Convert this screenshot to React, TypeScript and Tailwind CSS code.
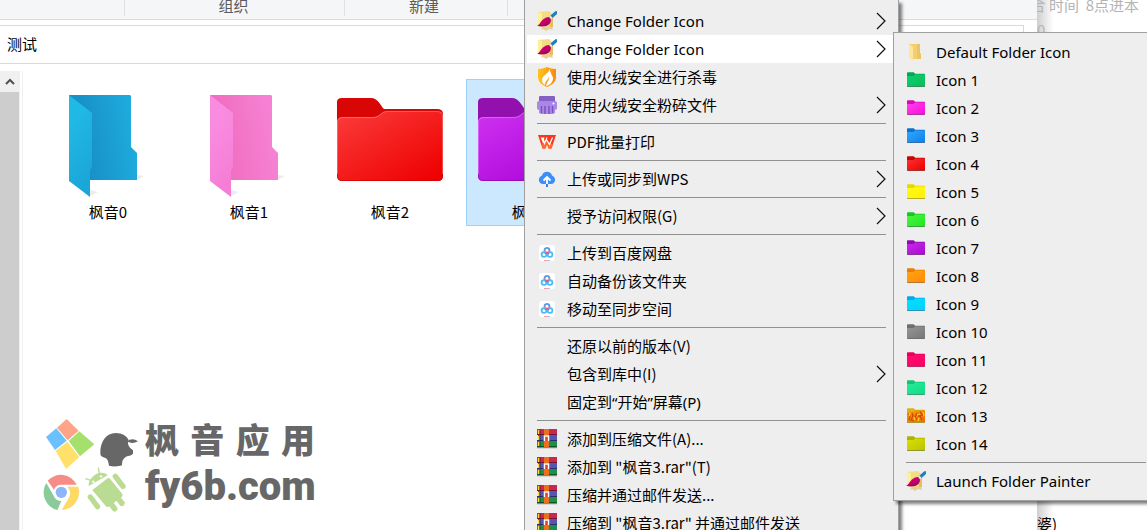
import React from "react";
import clsx from "clsx";

type IconProps = { id: string };

function BrushIcon() {
  return (
    <svg viewBox="0 0 20 20" className="size-5">
      <path d="M1 1l11-1 3 3 1 12-3 2-9-1-3-1z" fill="#f3dc83" />
      <path d="M1 1l4 1v12l-4 1z" fill="#fbf19b" />
      <path d="M12 5l4-1v12l-3 1z" fill="#e3be62" />
      <path d="M6 15l9 1 1 3-4-1-3 2-3-2-2 1z" fill="#e5cf98" />
      <path d="M13.500 4.500L18 .500q2-1 2 .500v2l-4.500 4z" fill="#1c7fc0" />
      <path d="M12 6l1.500-1.500 2 2.500-1.500 1.500z" fill="#dfe4e8" />
      <path d="M0 14.500c3-.500 3-3.500 6-6 2-1.700 4-2.500 6-2.500l2 2.500c0 3-1.500 5-4 6-3 1.300-7 1-10 0z" fill="#c4006c" />
      <path d="M0 14.500c5 0 8-2 13.500-4.500-1 2.500-2 3.800-4 4.600-3 1-7 .900-9.500-.100z" fill="#a4055c" />
    </svg>
  );
}

function ShieldIcon({ id }: IconProps) {
  return (
    <svg viewBox="0 0 20 20" className="size-5">
      <defs>
        <linearGradient id={id} x1="0" y1="0" x2="1" y2="0">
          <stop offset="0" stopColor="#ffc51e" />
          <stop offset="1" stopColor="#f98a0b" />
        </linearGradient>
      </defs>
      <path d="M1 2c4 0 6-1 9-2 3 1 5 2 9 2v8c0 5-4 8-9 10-5-2-9-5-9-10z" fill={`url(#${id})`} />
      <path d="M12 2c1 4-7 6-7 11 0 2 1 4 3 5-1-4 4-5 4-9 1 3-2 6-3 10 4-1 7-4 7-8 0-2-2-3-2-5-1-1-1-3-2-4z" fill="#fff" />
    </svg>
  );
}

function ShredderIcon() {
  return (
    <svg viewBox="0 0 20 20" className="size-5">
      <path d="M3 1h14a1 1 0 011 1v5H2V2a1 1 0 011-1z" fill="#8460c4" />
      <path d="M2 6h16a2 2 0 012 2v5a2 2 0 01-2 2H2a2 2 0 01-2-2V8a2 2 0 012-2z" fill="#aa86e6" />
      <path d="M2 11h16v7l-2 1H4l-2-1z" fill="#ad8ae8" />
      <path d="M4.500 11v7M8 11v8M12 11v8M15.500 11v7" stroke="#7953bd" strokeWidth="1.500" />
      <circle cx="16.500" cy="8.500" r="1" fill="#fff" />
    </svg>
  );
}

function WpsIcon() {
  return (
    <svg viewBox="0 0 20 20" className="size-5">
      <path d="M1 3h18l-4.500 13.500h-3L10 12l-1.500 4.500h-3z" fill="#f8371f" />
      <path d="M5.500 16.500h3L10 12l1.500 4.500h3l1.500-4-2.500-1-3.500-4-3.500 4-2-.500z" fill="#ff6a2c" />
      <path d="M4.500 6h2.200l-.700 3.500zM6 6l1.500 5.500L10 5.500M9 7l3.500 5.500L15.500 5.500" fill="none" stroke="#fff" strokeWidth="1.200" />
    </svg>
  );
}

function CloudIcon() {
  return (
    <svg viewBox="0 0 20 20" className="size-5">
      <path d="M5 6.500a5.200 5.200 0 0110 0c5 2 3.500 8.500-1 8.500H6C1.500 15 0 8.500 5 6.500z" fill="#3e8ef7" />
      <path d="M10 15V8M6.500 11.500L10 8l3.500 3.500" fill="none" stroke="#fff" strokeWidth="1.800" />
      <path d="M9 15h2v3H9z" fill="#2f80ee" />
    </svg>
  );
}

function NetdiskIcon() {
  return (
    <svg viewBox="0 0 20 20" className="size-5">
      <rect x="2" y="2" width="16" height="16" rx="3" fill="#fff" />
      <circle cx="10" cy="7.500" r="2.500" fill="none" stroke="#f0607f" strokeWidth="1.600" />
      <path d="M7.500 7.500a2.500 2.500 0 015 0" fill="none" stroke="#48a8f5" strokeWidth="1.600" />
      <circle cx="7" cy="11.500" r="2.400" fill="none" stroke="#45bdf6" strokeWidth="1.800" />
      <circle cx="13" cy="11.500" r="2.400" fill="none" stroke="#45bdf6" strokeWidth="1.800" />
      <path d="M10 9l-2 2M10 9l2 2" stroke="#ee5670" strokeWidth="1.500" />
      <path d="M7 17.500h3" stroke="#f59aa9" />
      <path d="M10 17.500h3" stroke="#9bc6f7" />
    </svg>
  );
}

function RarIcon() {
  return (
    <svg viewBox="0 0 20 20" className="size-5">
      <path d="M0 0h20v6H0z" fill="#c92750" />
      <path d="M0 5h20v1H0z" fill="#741532" />
      <path d="M1 6h19v6H1z" fill="#5456b4" />
      <path d="M0 11h20v1H0z" fill="#2c2c6c" />
      <path d="M0 12h20v6H0z" fill="#1d9044" />
      <path d="M0 17h20v1.500H0z" fill="#0d542a" />
      <path d="M1.500 1v4M1.500 7v4M1.500 13v4" stroke="#ffd83a" strokeWidth="1.200" />
      <path d="M3.500 0v18" stroke="#00000030" />
      <path d="M7 0h5v18H7z" fill="#e8701f" />
      <path d="M6.500 6h6v6h-6z" fill="#a8481c" />
      <path d="M7.500 12V7h4v5" fill="none" stroke="#fff" strokeWidth="1.500" />
      <path d="M9.500 8v4" stroke="#e0452a" />
      <path d="M0 19h20" stroke="#00000030" />
    </svg>
  );
}

function DefaultFolderIcon() {
  return (
    <svg viewBox="0 0 20 20" className="size-5">
      <path d="M3 2h11v9l1 1v5H6z" fill="#f3cf72" />
      <path d="M11 2h3v9l1 1v5h-4z" fill="#edc363" />
      <path d="M3 2l4 3v14l-4-3z" fill="#fde6a0" />
    </svg>
  );
}

function SmallFolder({ id, from, to, tab, fire }: IconProps & { from: string; to: string; tab: string; fire?: boolean }) {
  return (
    <svg viewBox="0 0 20 20" className="size-5">
      <defs>
        <linearGradient id={id} x1="0" y1="0" x2="1" y2="1">
          <stop offset="0" stopColor={from} />
          <stop offset="1" stopColor={to} />
        </linearGradient>
      </defs>
      <path d="M1 3q0-.700.700-.700h6l1.500 1.500h9q.800 0 .800.800V16q0 .700-.700.700H1.700Q1 16.700 1 16z" fill={tab} />
      <path d="M1 6h6.500L9 4.500h10V16H1z" fill={`url(#${id})`} />
      <path d="M1 16.500h18" stroke="#00000038" />
      {fire && (
        <g fill="none" strokeWidth="1.300">
          <path d="M2 8l2 2-1 4M6 7l1 3-2 4 3 1M11 7l-2 4 2 3M14 6l3 3-3 1 2 4M12 10h2" stroke="#d04a00" />
          <path d="M4 7l-1 3M8 11l1 3M13 12l-1 3M17 6l1 4M11 9l3-1" stroke="#ffd02e" />
        </g>
      )}
    </svg>
  );
}

function OpenFolder({ id, back, backTo, front, frontTo }: IconProps & { back: string; backTo: string; front: string; frontTo: string }) {
  return (
    <svg viewBox="0 0 106 110" className="h-[110px] w-[106px]">
      <defs>
        <linearGradient id={`${id}-b`} x1="0" y1="1" x2="1" y2="0.800">
          <stop offset="0.300" stopColor={back} />
          <stop offset="1" stopColor={backTo} />
        </linearGradient>
        <linearGradient id={`${id}-f`} x1="0" y1="0" x2="0.300" y2="1">
          <stop offset="0.300" stopColor={front} />
          <stop offset="1" stopColor={frontTo} />
        </linearGradient>
      </defs>
      <path d="M82 85l7 1-7 4zM35 100l8 2-8 4z" fill="#ececec" />
      <path d="M14 5h61l1 1v51l6 6v27H35z" fill={`url(#${id}-b)`} />
      <path d="M14 5l23 18v54l-2 3v27L14 91z" fill={`url(#${id}-f)`} />
    </svg>
  );
}

function ClosedFolder({ id, tab, from, to, edge }: IconProps & { tab: string; from: string; to: string; edge: string }) {
  return (
    <svg viewBox="0 0 106 110" className="h-[110px] w-[106px] shrink-0">
      <defs>
        <linearGradient id={id} x1="0" y1="0" x2="0.900" y2="1">
          <stop offset="0" stopColor={from} />
          <stop offset="1" stopColor={to} />
        </linearGradient>
      </defs>
      <path d="M0 12q0-4 5-4h29c7 0 9 7 13 11h53q6 0 6 5v60H0z" fill={tab} />
      <path d="M0 31q1-4 5-4h31c7 0 8-6 14-6h50q6 0 6 5v60q0 5-5 5H5q-5 0-5-5z" fill={`url(#${id})`} />
      <path d="M.500 84v2q0 4.500 4.500 4.500h96q4.500 0 4.500-4.500v-2" fill="none" stroke={edge} strokeOpacity="0.600" />
      <path d="M.500 84V31q1-3.500 4.500-3.500h31c7 0 8-6 14-6h50q5.500 0 5.500 5V84" fill="none" stroke="#ffffff" strokeOpacity="0.250" />
    </svg>
  );
}

type MenuEntry = {
  label: string;
  icon?: React.ReactNode;
  more?: boolean;
  latin?: boolean;
  active?: boolean;
};

const menuItems: MenuEntry[][] = [
  [
    { label: "Change Folder Icon", icon: <BrushIcon />, more: true, latin: true },
    { label: "Change Folder Icon", icon: <BrushIcon />, more: true, latin: true, active: true },
    { label: "使用火绒安全进行杀毒", icon: <ShieldIcon id="shield" /> },
    { label: "使用火绒安全粉碎文件", icon: <ShredderIcon />, more: true },
  ],
  [{ label: "PDF批量打印", icon: <WpsIcon /> }],
  [{ label: "上传或同步到WPS", icon: <CloudIcon />, more: true }],
  [{ label: "授予访问权限(G)", more: true }],
  [
    { label: "上传到百度网盘", icon: <NetdiskIcon /> },
    { label: "自动备份该文件夹", icon: <NetdiskIcon /> },
    { label: "移动至同步空间", icon: <NetdiskIcon /> },
  ],
  [
    { label: "还原以前的版本(V)" },
    { label: "包含到库中(I)", more: true },
    { label: "固定到“开始”屏幕(P)", latin: true },
  ],
  [
    { label: "添加到压缩文件(A)...", icon: <RarIcon /> },
    { label: "添加到 \"枫音3.rar\"(T)", icon: <RarIcon /> },
    { label: "压缩并通过邮件发送...", icon: <RarIcon /> },
    { label: "压缩到 \"枫音3.rar\" 并通过邮件发送", icon: <RarIcon /> },
  ],
];

const folderColors = [
  { from: "#12cf70", to: "#08bd5c", tab: "#04a94f" },
  { from: "#ff45ea", to: "#fb0cdc", tab: "#d80abd" },
  { from: "#35a8fb", to: "#0c80ee", tab: "#0c70d4" },
  { from: "#fb3333", to: "#ee0000", tab: "#cc0404" },
  { from: "#fff91c", to: "#fff200", tab: "#e8d800" },
  { from: "#4df547", to: "#1ee81c", tab: "#14c918" },
  { from: "#cc28ee", to: "#a80bd0", tab: "#8d0cab" },
  { from: "#ffa41c", to: "#ff8c00", tab: "#eb7d00" },
  { from: "#08dcff", to: "#00d4ff", tab: "#00abe8" },
  { from: "#959595", to: "#777777", tab: "#6d6d6d" },
  { from: "#ff0d73", to: "#ff0061", tab: "#e60058" },
  { from: "#2aea9b", to: "#10dc83", tab: "#10c575" },
  { from: "#f79a0c", to: "#ee6b05", tab: "#ddb313", fire: true },
  { from: "#dbe004", to: "#b9c400", tab: "#aab300" },
];

function MenuRow({ label, icon, more, latin, active }: MenuEntry) {
  return (
    <button
      type="button"
      role="menuitem"
      aria-haspopup={more ? "menu" : undefined}
      className={clsx(
        "flex h-7 w-full items-center gap-2.5 px-2.5 text-left text-[15px] whitespace-nowrap text-black",
        latin && "font-['Noto_Sans','Noto_Sans_CJK_SC',sans-serif]",
        active ? "bg-white" : "hover:bg-white"
      )}
    >
      <span className="size-5 shrink-0">{icon}</span>
      <span className="flex-1">{label}</span>
      {more && (
        <svg viewBox="0 0 10 18" className="h-[18px] w-2.5">
          <path d="M1 1l8 8-8 8" fill="none" stroke="#111" strokeWidth="1.200" />
        </svg>
      )}
    </button>
  );
}

function Separator() {
  return <div role="separator" className="mx-2.5 my-1 h-px bg-[#919191]" />;
}

function FileItem({ name, selected, children }: { name: string; selected?: boolean; children: React.ReactNode }) {
  return (
    <button
      type="button"
      className={clsx(
        "flex w-[130px] shrink-0 flex-col items-center border pt-2.5 pb-px text-[15px] leading-6 text-black",
        selected ? "border-[#99d1ff] bg-[#cce8ff]" : "border-transparent"
      )}
    >
      {children}
      {name}
    </button>
  );
}

function Watermark() {
  return (
    <div className="flex items-center gap-1.5 text-[#676767]">
      <svg viewBox="39 51 288 288" className="size-24">
        <path d="M110 57l36 35-33 29-32-38z" fill="#ffa488" />
        <path d="M79 85l31 37-35 28-27-39z" fill="#6bc1ff" />
        <path d="M148 94l45 39-43 36-34-46z" fill="#a5e06c" />
        <path d="M112 125l36 46-40 36-31-55z" fill="#ffe06b" />
        <path d="M211 160c-1-35 18-61 46-61 20 0 34 10 39 21-5 13 0 21 13 31v10c-6 7-13 5-21 9-8 5-13 13-12 26-11 4-27 4-39 1-3-19-6-22-17-25-7-3-9-6-9-12z" fill="#676767" />
        <path d="M291 124q16-12 33 0-17 10-33 0z" fill="#676767" />
        <path d="M53 242a53 53 0 0187 12H94q-16 0-22 15z" fill="#f58d86" />
        <path d="M49 249l24 42q7 12 21 12l-12 27a54 54 0 01-33-81z" fill="#8acb99" />
        <path d="M112 260h33a54 54 0 01-50 70l23-40q7-15-6-30z" fill="#ffd966" />
        <circle cx="94" cy="277" r="17" fill="#8cb5fa" />
        <g fill="#badb92">
          <path d="M176 258c-2-26 34-53 57-32z" />
          <path d="M187 270l46-35q4-3 7 1l37 46q3 5-2 9l-39 29q-5 3-9-2l-40-48z" />
          <rect x="248" y="221" width="16" height="54" rx="8" transform="rotate(-37 256 229)" />
          <rect x="173" y="283" width="16" height="52" rx="8" transform="rotate(-37 181 291)" />
          <path d="M230 308l13-10 19 25q2 9-7 12-6 0-8-4zM252 292l13-10 19 25q2 9-7 12-6 0-8-4z" />
        </g>
        <path d="M205 203l3 17M166 236l17 5" stroke="#badb92" strokeWidth="4" />
        <circle cx="190" cy="245" r="3.500" fill="#fff" />
        <circle cx="213" cy="229" r="3.500" fill="#fff" />
      </svg>
      <div className="flex w-[170px] flex-col">
        <div className="flex justify-between text-[34px] leading-[44px] font-black">
          {["枫", "音", "应", "用"].map((char) => (
            <span key={char}>{char}</span>
          ))}
        </div>
        <div className="font-['Roboto',sans-serif] text-[40px] leading-[52px] font-black">fy6b.com</div>
      </div>
    </div>
  );
}

function ExplorerWindow() {
  return (
    <main className="relative z-10 flex min-w-0 flex-1 flex-col bg-white">
      <div className="flex h-5 shrink-0 items-start border-b border-[#d9dbdd] bg-[#f5f6f7] text-[15px] leading-3 text-[#5c5c5c]">
        <div className="h-4 w-[125px] border-r border-[#dfe1e3]" />
        <div className="h-4 w-[220px] border-r border-[#dfe1e3] pr-0.5 text-center">组织</div>
        <div className="h-4 w-[163px] border-r border-[#dfe1e3] pr-1 text-center">新建</div>
      </div>
      <div className="mt-[5px] mr-[13px] flex h-[39px] shrink-0 items-center border border-l-0 border-[#d9d9d9] px-[7px] text-[15px] text-black">
        测试
      </div>
      <div className="mt-[7px] flex min-h-0 flex-1">
        <div className="flex w-5 flex-col bg-[#f0f0f0]">
          <button type="button" aria-label="向上滚动" className="flex h-[21px] shrink-0 items-center justify-center">
            <svg viewBox="0 0 10 8" className="h-2 w-2.5">
              <path d="M1 6l4-4 4 4" fill="none" stroke="#505050" strokeWidth="2" />
            </svg>
          </button>
          <div className="mr-px flex-1 bg-[#cdcdcd]" />
        </div>
        <div className="ml-0.5 flex min-w-0 flex-1 flex-col justify-between overflow-hidden border-l border-[#f0f0f0] pt-2 pb-[17px] pl-5">
          <div className="flex gap-[11px]">
            <FileItem name="枫音0">
              <OpenFolder id="open-blue" back="#1890c8" backTo="#1eaadc" front="#20b8e4" frontTo="#1ba6d8" />
            </FileItem>
            <FileItem name="枫音1">
              <OpenFolder id="open-pink" back="#f06fc0" backTo="#f681d4" front="#f98ce0" frontTo="#f57dd6" />
            </FileItem>
            <FileItem name="枫音2">
              <ClosedFolder id="closed-red" tab="#d90606" from="#fb3c3c" to="#ee0000" edge="#c40000" />
            </FileItem>
            <FileItem name="枫音3" selected>
              <ClosedFolder id="closed-purple" tab="#9211ae" from="#cf33f0" to="#a800d8" edge="#7d0a9c" />
            </FileItem>
          </div>
          <Watermark />
        </div>
      </div>
    </main>
  );
}

export default function App() {
  return (
    <div className="relative flex h-screen overflow-hidden bg-white font-['Noto_Sans_CJK_SC',sans-serif]">
      <ExplorerWindow />

      <aside className="flex w-[110px] shrink-0 flex-col overflow-hidden bg-linear-to-r from-[#cfcfcf] via-white via-15% to-white text-[15px] text-[#b4b4b4]">
        <div className="flex h-2.5 items-center justify-end pr-2 whitespace-pre">合 时间  8点进本</div>
        <div className="mt-3.5 leading-3">0</div>
        <div className="mt-auto h-4 leading-5 text-black">婆)</div>
      </aside>

      <div
        role="menu"
        className="absolute top-0 left-[524px] z-20 h-full w-[375px] overflow-hidden border-x border-[#a0a0a0] bg-[#eeeeee] px-0.5 pt-[7px] shadow-[3px_3px_3px_#00000080]"
      >
        {menuItems.map((group, i) => (
          <React.Fragment key={i}>
            {i > 0 && <Separator />}
            {group.map((item, j) => (
              <MenuRow key={j} {...item} />
            ))}
          </React.Fragment>
        ))}
      </div>

      <div
        role="menu"
        className="absolute top-8 -right-3 left-[893px] z-30 border border-[#a0a0a0] bg-[#eeeeee] px-0.5 py-[5px] shadow-[3px_3px_3px_#00000080]"
      >
        <MenuRow label="Default Folder Icon" icon={<DefaultFolderIcon />} latin />
        {folderColors.map((color, i) => (
          <MenuRow key={i} label={`Icon ${i + 1}`} icon={<SmallFolder id={`small-${i}`} {...color} />} latin />
        ))}
        <Separator />
        <MenuRow label="Launch Folder Painter" icon={<BrushIcon />} latin />
      </div>
    </div>
  );
}
